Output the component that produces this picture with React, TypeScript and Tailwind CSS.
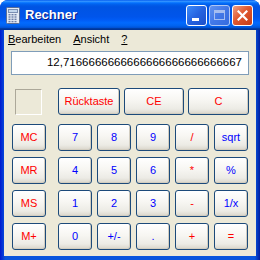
import React from "react";

const font = { fontFamily: '"Liberation Sans", Arial, sans-serif' };

type Key = { label: string; color: "red" | "blue" };

const rows: Key[][] = [
  [
    { label: "7", color: "blue" },
    { label: "8", color: "blue" },
    { label: "9", color: "blue" },
    { label: "/", color: "red" },
    { label: "sqrt", color: "blue" },
  ],
  [
    { label: "4", color: "blue" },
    { label: "5", color: "blue" },
    { label: "6", color: "blue" },
    { label: "*", color: "red" },
    { label: "%", color: "blue" },
  ],
  [
    { label: "1", color: "blue" },
    { label: "2", color: "blue" },
    { label: "3", color: "blue" },
    { label: "-", color: "red" },
    { label: "1/x", color: "blue" },
  ],
  [
    { label: "0", color: "blue" },
    { label: "+/-", color: "blue" },
    { label: ".", color: "blue" },
    { label: "+", color: "red" },
    { label: "=", color: "red" },
  ],
];

function XpButton({ label, color, className }: { label: string; color: "red" | "blue"; className: string }) {
  return (
    <button
      className={`${className} flex items-center justify-center rounded-[3px] border border-[#1c4a7a] bg-[linear-gradient(180deg,#ffffff_0%,#f7f6f2_45%,#ecebe5_80%,#d9d5ca_100%)] text-[11px] leading-none shadow-[inset_-1px_-1px_0_#d2cdc0] ${
        color === "red" ? "text-[#ff0000]" : "text-[#0000ff]"
      }`}
    >
      {label}
    </button>
  );
}

function CalcIcon() {
  return (
    <svg width="16" height="17" viewBox="0 0 16 17">
      <rect x="1.5" y="0.5" width="13" height="16" rx="1" fill="#e4eaf4" stroke="#5a6e96" />
      <rect x="3.5" y="2.5" width="9" height="3" fill="#c3d6ec" stroke="#7b8fb3" />
      {[0, 1, 2, 3].map((r) =>
        [0, 1, 2].map((c) => (
          <rect key={`${r}-${c}`} x={3.5 + c * 3} y={7 + r * 2.3} width="2" height="1.4" fill="#6c7ea6" />
        ))
      )}
    </svg>
  );
}

export default function App() {
  return (
    <div className="w-[260px] h-[260px] bg-white" style={font}>
      <div className="flex flex-col h-full rounded-t-[8px] overflow-hidden bg-[linear-gradient(90deg,#0019cf_0%,#0855dd_2%,#0855dd_98%,#001ea0_100%)]">
        {/* title bar */}
        <div className="h-[30px] flex items-center pl-[5px] pr-[7px] bg-[linear-gradient(180deg,#0058ee_0%,#3593ff_4%,#288eff_6%,#127dff_8%,#036ffc_10%,#0262ee_14%,#0057e5_20%,#0054e3_24%,#0055eb_56%,#005bf5_66%,#026afe_76%,#0062ef_86%,#0052d6_92%,#0040ab_94%,#003092_100%)]">
          <CalcIcon />
          <span className="ml-[4px] text-white font-bold text-[13px] [text-shadow:1px_1px_0_#0a1883]">Rechner</span>
          <div className="ml-auto flex gap-[2px]">
            <div className="w-[21px] h-[21px] rounded-[3px] border border-white bg-[linear-gradient(135deg,#3c8cfb_0%,#2663e0_50%,#1d4fc9_100%)] flex items-end pl-[5px] pb-[4px]">
              <div className="w-[7px] h-[3px] bg-white" />
            </div>
            <div className="w-[21px] h-[21px] rounded-[3px] border border-[#c4d3f5] bg-[linear-gradient(135deg,#6b9af3_0%,#4a7be6_50%,#3c6cdb_100%)] flex items-center justify-center opacity-90">
              <div className="w-[11px] h-[10px] border border-[#b7c9f1] border-t-[3px]" />
            </div>
            <div className="w-[21px] h-[21px] rounded-[3px] border border-white bg-[linear-gradient(135deg,#f0a185_0%,#e0582f_45%,#c83d18_100%)] flex items-center justify-center">
              <svg width="11" height="11" viewBox="0 0 11 11">
                <path d="M1.5 1.5 L9.5 9.5 M9.5 1.5 L1.5 9.5" stroke="white" strokeWidth="2.2" strokeLinecap="square" />
              </svg>
            </div>
          </div>
        </div>

        {/* client area */}
        <div className="flex-1 mx-[4px] mb-[4px] bg-[#ece9d8] flex flex-col">
          {/* menu */}
          <div className="h-[18px] flex items-center gap-[12px] pl-[4px] text-[11px] text-black">
            <span>
              <span className="underline">B</span>earbeiten
            </span>
            <span>
              <span className="underline">A</span>nsicht
            </span>
            <span>
              <span className="underline">?</span>
            </span>
          </div>

          {/* display */}
          <div className="mt-[3px] mx-[7px] h-[24px] bg-white border border-[#7f9db9] flex items-center justify-end pr-[6px] text-[11.5px] text-black">
            12,7166666666666666666666666667
          </div>

          {/* top row */}
          <div className="mt-[13px] flex items-center">
            <div className="ml-[11px] w-[27px] h-[26px] border border-t-[#aca899] border-l-[#aca899] border-b-white border-r-white" />
            <div className="ml-[16px] flex gap-[4px]">
              <XpButton label="Rücktaste" color="red" className="w-[62px] h-[27px]" />
              <XpButton label="CE" color="red" className="w-[60px] h-[27px]" />
              <XpButton label="C" color="red" className="w-[61px] h-[27px]" />
            </div>
          </div>

          {/* keypad */}
          <div className="mt-[9px] flex">
            <div className="ml-[8px] flex flex-col gap-[6px]">
              {["MC", "MR", "MS", "M+"].map((m) => (
                <XpButton key={m} label={m} color="red" className="w-[34px] h-[27px]" />
              ))}
            </div>
            <div className="ml-[12px] grid grid-cols-5 gap-x-[5px] gap-y-[6px]">
              {rows.flat().map((k, i) => (
                <XpButton key={i} label={k.label} color={k.color} className="w-[34px] h-[27px]" />
              ))}
            </div>
          </div>
        </div>
      </div>
    </div>
  );
}
